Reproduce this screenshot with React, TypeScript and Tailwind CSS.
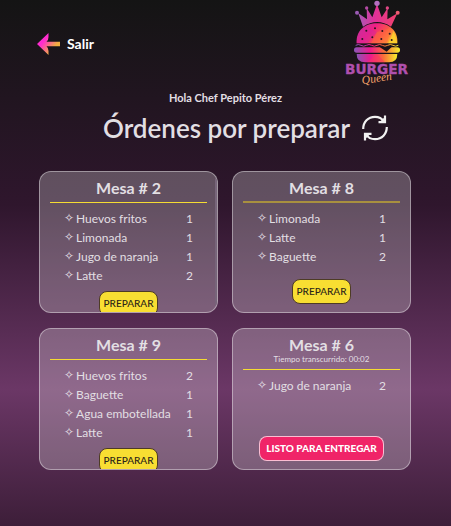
import React from "react";

type Item = { name: string; qty: number };
type Order = {
  table: number;
  items: Item[];
  elapsed?: string;
  ready?: boolean;
  scrolls?: boolean;
  softRule?: boolean;
};

const orders: Order[] = [
  {
    table: 2,
    scrolls: true,
    items: [
      { name: "Huevos fritos", qty: 1 },
      { name: "Limonada", qty: 1 },
      { name: "Jugo de naranja", qty: 1 },
      { name: "Latte", qty: 2 },
    ],
  },
  {
    table: 8,
    softRule: true,
    items: [
      { name: "Limonada", qty: 1 },
      { name: "Latte", qty: 1 },
      { name: "Baguette", qty: 2 },
    ],
  },
  {
    table: 9,
    items: [
      { name: "Huevos fritos", qty: 2 },
      { name: "Baguette", qty: 1 },
      { name: "Agua embotellada", qty: 1 },
      { name: "Latte", qty: 1 },
    ],
  },
  {
    table: 6,
    elapsed: "00:02",
    ready: true,
    items: [{ name: "Jugo de naranja", qty: 2 }],
  },
];

function BackArrow() {
  return (
    <svg viewBox="0 0 24 24" className="size-6" aria-hidden="true">
      <defs>
        <linearGradient id="arrow" x1="0.1" y1="0.2" x2="0.9" y2="0.8">
          <stop offset="0.25" stopColor="#ff2bd0" />
          <stop offset="0.8" stopColor="#f2ae40" />
        </linearGradient>
      </defs>
      <path d="M0 12 L11.500 1 V5 Q11.500 8 9.500 9.700 H23 V14.300 H9.500 Q11.500 16 11.500 19 V23 Z" fill="url(#arrow)" />
    </svg>
  );
}

function RefreshIcon() {
  return (
    <svg viewBox="0 0 26 26" className="size-[26px]" fill="none" stroke="#f2f2f2" strokeWidth="2.2" aria-hidden="true">
      <path d="M1.200 14 C1.200 7 6 1.800 13 1.800 C17 1.800 20 3.500 22 6.500" />
      <path d="M24.800 12 C24.800 19 20 24.200 13 24.200 C9 24.200 6 22.500 4 19.500" />
      <path d="M23 0.500 V7.200 H16.500" />
      <path d="M20 4.500 L22.500 2.500 V7 H18 Z" fill="#f2f2f2" stroke="none" />
      <path d="M3 25.500 V18.800 H9.500" />
      <path d="M6 21.500 L3.500 23.500 V19 H8 Z" fill="#f2f2f2" stroke="none" />
    </svg>
  );
}

function Logo() {
  return (
    <svg viewBox="0 0 255 270" className="h-[90px] w-[85px]" role="img" aria-label="Burger Queen">
      <defs>
        <linearGradient id="bun" x1="0" y1="0.1" x2="1" y2="0.5">
          <stop offset="0" stopColor="#b8379f" />
          <stop offset="0.4" stopColor="#f01f86" />
          <stop offset="0.7" stopColor="#f9524a" />
          <stop offset="1" stopColor="#ffb02e" />
        </linearGradient>
        <linearGradient id="base" x1="0" y1="0" x2="1" y2="0">
          <stop offset="0" stopColor="#8a55b8" />
          <stop offset="0.35" stopColor="#ef1a8c" />
          <stop offset="0.65" stopColor="#fb6b3a" />
          <stop offset="1" stopColor="#f6f02c" />
        </linearGradient>
        <linearGradient id="crown" x1="0" y1="0" x2="1" y2="0">
          <stop offset="0" stopColor="#a65bb8" />
          <stop offset="0.4" stopColor="#e0309a" />
          <stop offset="1" stopColor="#f2416b" />
        </linearGradient>
      </defs>
      <g fill="url(#crown)">
        <path d="M84 80 L70 40 L96 58 L95 24 L112 52 L126 12 L140 52 L158 24 L157 58 L187 40 L168 80 Q127 52 84 80 Z" />
        <circle cx="66" cy="38" r="6" fill="#9b5bb5" />
        <circle cx="95" cy="24" r="5" fill="#b44ba5" />
        <circle cx="126" cy="10" r="8" fill="#b56fc0" />
        <circle cx="157" cy="24" r="5" fill="#e04886" />
        <circle cx="188" cy="38" r="6" fill="#ef5c72" />
      </g>
      <path d="M65 130 C62 92 90 70 126 70 C162 70 190 92 187 130 Z" fill="url(#bun)" />
      <path d="M92 80 L126 96 L98 130 H65 Q64 94 92 80 Z" fill="#d4269b" opacity="0.5" />
      <path d="M126 96 L168 84 L156 130 H108 Z" fill="#ff6a3c" opacity="0.5" />
      <path d="M176 92 L187 130 H160 Z" fill="#f8e22c" opacity="0.6" />
      <g fill="#2a1420">
        <circle cx="94" cy="92" r="3" />
        <circle cx="120" cy="85" r="3" />
        <circle cx="142" cy="93" r="3" />
        <circle cx="164" cy="101" r="3" />
        <circle cx="82" cy="117" r="3" />
        <circle cx="112" cy="112" r="3" />
        <circle cx="139" cy="117" r="3" />
        <circle cx="170" cy="120" r="3" />
      </g>
      <path d="M62 136 Q70 131 78 136 T94 136 T110 136 T126 136 T142 136 T158 136 T174 136 T190 136" fill="none" stroke="url(#base)" strokeWidth="3" />
      <rect x="57" y="142" width="138" height="16" rx="8" fill="url(#base)" />
      <path d="M134 141 L155 155 L170 141 Z" fill="#1b1319" />
      <path d="M65 162 H187 Q187 187 162 187 H90 Q65 187 65 162 Z" fill="url(#base)" />
      <path d="M126 162 L150 187 H96 Z" fill="#f9335f" opacity="0.5" />
      <text x="30" y="221" fontSize="41" fontWeight="700" fill="#b050ae" stroke="#b050ae" strokeWidth="1" className="font-['DejaVu_Sans',sans-serif]">BURGER</text>
      <text x="82" y="253" fontSize="35" fontStyle="italic" fill="#f5a26b" transform="rotate(-9 82 253)" className="font-['Liberation_Serif',serif]">Queen</text>
    </svg>
  );
}

function OrderCard({ order }: { order: Order }) {
  const rule = order.softRule ? "border-b-2 border-[#a8903f]" : "border-b border-[#f5dc32]";
  return (
    <article className="relative flex h-[142px] flex-col overflow-hidden rounded-xl border border-white/40 bg-white/25 px-2.5 pb-2">
      <header className={`shrink-0 pt-1.5 text-center ${rule} ${order.softRule ? "pb-[3px]" : "pb-1"}`}>
        <h2 className="text-base leading-5 font-bold">Mesa # {order.table}</h2>
        {order.elapsed && <p className="pb-0.5 text-[8px] leading-2">Tiempo transcurrido: {order.elapsed}</p>}
      </header>
      <ul className="mt-1.5 shrink-0 px-3.5 text-xs leading-[19px]">
        {order.items.map((item) => (
          <li key={item.name} className="flex justify-between">
            <span className="flex gap-0.5">
              <span className="font-['DejaVu_Sans',sans-serif] text-[12px] font-bold">✧</span>
              {item.name}
            </span>
            <span>{item.qty}</span>
          </li>
        ))}
      </ul>
      <div className="mt-auto flex shrink-0 justify-center pt-1.5">
        {order.ready ? (
          <button type="button" className="h-[25px] rounded-lg border border-white/70 bg-[#f02468] px-1.5 text-[10px] font-black whitespace-nowrap text-white">
            LISTO PARA ENTREGAR
          </button>
        ) : (
          <button type="button" className="h-[25px] rounded-lg border border-[#4d3b25] bg-[#f8de32] px-1 text-[10px] font-medium text-[#2b2418]">
            PREPARAR
          </button>
        )}
      </div>
      {order.scrolls && <span className="absolute top-1.5 right-0 h-32 w-0.5 rounded-full bg-[#77657a]" />}
    </article>
  );
}

export default function App() {
  return (
    <div className="min-h-screen bg-[linear-gradient(to_bottom,#141414_0%,#2f162d_39%,#6b3766_74%,#3d1e39_100%)] font-['Lato','Open_Sans',sans-serif] text-[#e2dfe3]">
      <header className="flex h-[90px] items-start justify-between pr-[31px] pl-[37px]">
        <a href="#salir" className="mt-8 flex items-center gap-1.5 text-sm font-bold text-white">
          <BackArrow />
          Salir
        </a>
        <Logo />
      </header>
      <main>
        <p className="text-center text-[11px] leading-4 font-bold">Hola Chef Pepito Pérez</p>
        <div className="mt-1 flex items-center justify-center gap-3 pl-10">
          <h1 className="text-[26px] leading-9 font-semibold">Órdenes por preparar</h1>
          <button type="button" aria-label="Actualizar">
            <RefreshIcon />
          </button>
        </div>
        <section className="mt-[25px] grid grid-cols-2 gap-x-3.5 gap-y-[15px] pr-10 pl-[39px]">
          {orders.map((order) => (
            <OrderCard key={order.table} order={order} />
          ))}
        </section>
      </main>
    </div>
  );
}
